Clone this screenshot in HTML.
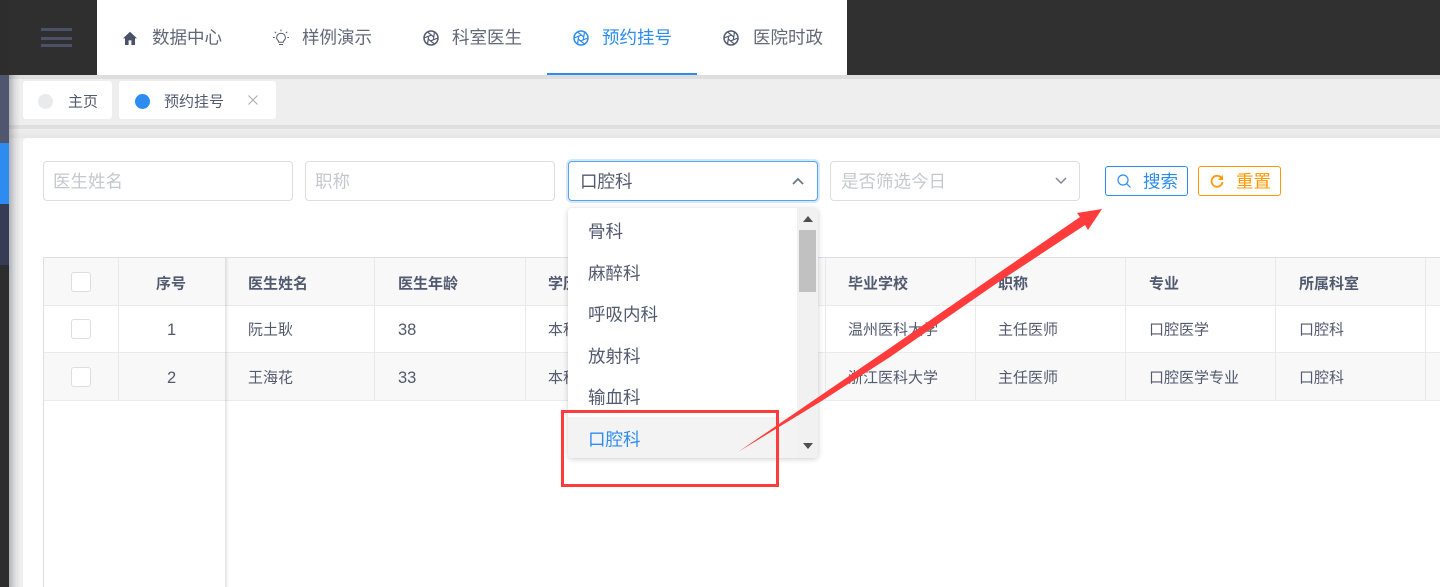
<!DOCTYPE html>
<html lang="zh-CN">
<head>
<meta charset="utf-8">
<title>预约挂号</title>
<style>
html,body{margin:0;padding:0;width:1440px;height:587px;overflow:hidden;background:#fff}
body{position:relative;font-family:"Liberation Sans","Noto Sans CJK SC",sans-serif;color:#515a6e}
.a{position:absolute;box-sizing:border-box}
.t{position:absolute;white-space:nowrap;transform:translateY(calc(-50% + 1px));line-height:1}
.nav{font-size:17.5px;color:#616878}
.tab{font-size:15px;color:#515a6e}
.ph{font-size:17.5px;color:#c5c8ce}
.inp{position:absolute;box-sizing:border-box;top:161px;width:250px;height:40px;border:1px solid #dcdee2;border-radius:4px;background:#fff}
.th{font-size:15px;font-weight:bold;color:#515a6e}
.td{font-size:15px;color:#515a6e}
.num{font-size:16.5px}
.dd{font-size:17.5px;color:#515a6e;left:588px}
.v{position:absolute;width:1px;background:#e8eaec}
.h{position:absolute;height:1px;background:#e8eaec}
.cb{position:absolute;left:71px;width:20px;height:20px;border:1px solid #dcdee2;border-radius:3px;background:#fff;box-sizing:border-box}
svg{position:absolute;overflow:visible}
</style>
</head>
<body>
<!-- page background -->
<div class="a" style="left:9px;top:75px;width:1431px;height:512px;background:#eee"></div>
<div class="a" style="left:9px;top:75px;width:1431px;height:4px;background:#dedede"></div>
<div class="a" style="left:9px;top:125px;width:1431px;height:4px;background:#dfdfdf"></div>
<div class="a" style="left:9px;top:129px;width:1431px;height:9px;background:linear-gradient(#efefef,#e6e6e6)"></div>
<div class="a" style="left:9px;top:75px;width:11px;height:512px;background:linear-gradient(90deg,rgba(60,65,80,.34),rgba(60,65,80,.1) 55%,rgba(60,65,80,0))"></div>

<!-- left strip -->
<div class="a" style="left:0;top:75px;width:9px;height:68px;background:#4f566d"></div>
<div class="a" style="left:0;top:143px;width:9px;height:61px;background:#2d8cf0"></div>
<div class="a" style="left:0;top:204px;width:9px;height:61px;background:#363c54"></div>
<div class="a" style="left:0;top:265px;width:9px;height:322px;background:#2d2d2d"></div>

<!-- top bar -->
<div class="a" style="left:0;top:0;width:97px;height:75px;background:#2f2f2f"></div>
<div class="a" style="left:0;top:0;width:9px;height:75px;background:#2d2d2d"></div>
<div class="a" style="left:847px;top:0;width:593px;height:75px;background:#303030"></div>
<div class="a" style="left:97px;top:0;width:750px;height:75px;background:#fff"></div>
<div class="a" style="left:41px;top:28px;width:31px;height:3px;background:#4b5268"></div>
<div class="a" style="left:41px;top:37px;width:31px;height:3px;background:#4b5268"></div>
<div class="a" style="left:41px;top:44px;width:31px;height:3px;background:#4b5268"></div>
<div class="a" style="left:547px;top:73px;width:150px;height:2px;background:#2d8cf0"></div>

<svg style="left:123px;top:31px" width="14" height="14" viewBox="0 0 14 14"><path d="M7 .8 0 7.4h2V14h3.600V9.400h2.800V14H12V7.400h2z" fill="#4b5268"/></svg>
<span class="t nav" style="left:152px;top:37px">数据中心</span>

<svg style="left:273px;top:29px" width="16" height="17" viewBox="0 0 16 17" fill="none" stroke="#515a6e" stroke-width="1"><path d="M5 11.500C3.800 10.500 3.600 9.400 3.600 8.600a4.400 4.400 0 0 1 8.800 0c0 .8-.2 1.900-1.400 2.900-.5.500-.8 1.100-.8 1.800H5.800c0-.7-.3-1.300-.8-1.800zM6 15.500h4M8 .5v1.800M1.800 2.800l1.300 1.300M14.200 2.800l-1.300 1.300M0 8.500h1.700M14.300 8.500H16"/></svg>
<span class="t nav" style="left:302px;top:37px">样例演示</span>

<svg style="left:423px;top:30px" width="16" height="16" viewBox="0 0 16 16" fill="none" stroke="#515a6e"><circle cx="8" cy="8" r="7" stroke-width="1.500"/><path stroke-width="1.200" d="M15 8L7.480 10.950M11.500 14.060L5.180 9.030M4.500 14.060L5.700 6.070M1 8L8.520 5.050M4.500 1.940L10.820 6.970M11.500 1.940L10.300 9.930"/></svg>
<span class="t nav" style="left:452px;top:37px">科室医生</span>

<svg style="left:573px;top:30px" width="16" height="16" viewBox="0 0 16 16" fill="none" stroke="#2d8cf0"><circle cx="8" cy="8" r="7" stroke-width="1.500"/><path stroke-width="1.200" d="M15 8L7.480 10.950M11.500 14.060L5.180 9.030M4.500 14.060L5.700 6.070M1 8L8.520 5.050M4.500 1.940L10.820 6.970M11.500 1.940L10.300 9.930"/></svg>
<span class="t nav" style="left:602px;top:37px;color:#2d8cf0">预约挂号</span>

<svg style="left:723px;top:30px" width="16" height="16" viewBox="0 0 16 16" fill="none" stroke="#515a6e"><circle cx="8" cy="8" r="7" stroke-width="1.500"/><path stroke-width="1.200" d="M15 8L7.480 10.950M11.500 14.060L5.180 9.030M4.500 14.060L5.700 6.070M1 8L8.520 5.050M4.500 1.940L10.820 6.970M11.500 1.940L10.300 9.930"/></svg>
<span class="t nav" style="left:753px;top:37px">医院时政</span>

<!-- tabs -->
<div class="a" style="left:23px;top:81px;width:89px;height:38px;background:#fff;border-radius:3px"></div>
<div class="a" style="left:38px;top:94px;width:15px;height:15px;border-radius:50%;background:#e8eaec"></div>
<span class="t tab" style="left:68px;top:101px">主页</span>
<div class="a" style="left:119px;top:81px;width:157px;height:38px;background:#fff;border-radius:3px"></div>
<div class="a" style="left:135px;top:94px;width:15px;height:15px;border-radius:50%;background:#2d8cf0"></div>
<span class="t tab" style="left:164px;top:101px">预约挂号</span>
<svg style="left:248px;top:95px" width="10" height="10" viewBox="0 0 10 10"><path d="M.5.500l9 9M9.500.500l-9 9" stroke="#a8abb2" stroke-width="1" fill="none"/></svg>

<!-- card -->
<div class="a" style="left:23px;top:138px;width:1417px;height:449px;background:#fff;border-radius:4px 0 0 0"></div>

<!-- filters -->
<div class="inp" style="left:43px"></div>
<span class="t ph" style="left:53px;top:181px">医生姓名</span>
<div class="inp" style="left:305px"></div>
<span class="t ph" style="left:315px;top:181px">职称</span>
<div class="inp" style="left:568px;border-color:#57a3f3;box-shadow:0 0 0 2px rgba(45,140,240,.2)"></div>
<span class="t" style="left:580px;top:181px;font-size:17.500px;color:#515a6e">口腔科</span>
<svg style="left:792px;top:178px" width="12" height="7" viewBox="0 0 12 7"><path d="M1 6l5-5 5 5" fill="none" stroke="#6b7486" stroke-width="1.700"/></svg>
<div class="inp" style="left:830px"></div>
<span class="t ph" style="left:841px;top:181px">是否筛选今日</span>
<svg style="left:1055px;top:177px" width="12" height="7" viewBox="0 0 12 7"><path d="M1 1l5 5 5-5" fill="none" stroke="#808695" stroke-width="1.500"/></svg>

<!-- buttons -->
<div class="a" style="left:1105px;top:166px;width:83px;height:30px;border:1px solid #2d8cf0;border-radius:3px;background:#fff"></div>
<svg style="left:1117px;top:174px" width="15" height="15" viewBox="0 0 15 15" fill="none" stroke="#2d8cf0" stroke-width="1.200"><circle cx="6" cy="6" r="5"/><path d="M9.700 9.700l3.800 3.800"/></svg>
<span class="t" style="left:1143px;top:181px;font-size:17.500px;color:#2d8cf0">搜索</span>
<div class="a" style="left:1198px;top:166px;width:83px;height:30px;border:1px solid #f90;border-radius:3px;background:#fff"></div>
<svg style="left:1210px;top:174px" width="14" height="14" viewBox="0 0 14 14" fill="none"><path d="M11.800 4.500A5.500 5.500 0 1 0 12.500 8" stroke="#f90" stroke-width="1.800"/><path d="M13 1v5H8z" fill="#f90"/></svg>
<span class="t" style="left:1236px;top:181px;font-size:17.500px;color:#f90">重置</span>

<!-- table -->
<div class="a" style="left:43px;top:257px;width:1397px;height:330px;border:1px solid #dcdee2;border-width:1px 0 0 1px"></div>
<div class="a" style="left:44px;top:258px;width:1396px;height:47px;background:#f8f8f9"></div>
<div class="a" style="left:44px;top:353px;width:1396px;height:47px;background:#f8f8f9"></div>
<div class="h" style="left:44px;top:305px;width:1396px"></div>
<div class="h" style="left:44px;top:352px;width:1396px"></div>
<div class="h" style="left:44px;top:400px;width:1396px"></div>
<div class="v" style="left:118px;top:258px;height:142px"></div>
<div class="v" style="left:374px;top:258px;height:142px"></div>
<div class="v" style="left:525px;top:258px;height:142px"></div>
<div class="v" style="left:825px;top:258px;height:142px"></div>
<div class="v" style="left:975px;top:258px;height:142px"></div>
<div class="v" style="left:1125px;top:258px;height:142px"></div>
<div class="v" style="left:1275px;top:258px;height:142px"></div>
<div class="v" style="left:1425px;top:258px;height:142px"></div>
<div class="a" style="left:225px;top:258px;width:4px;height:329px;background:linear-gradient(90deg,rgba(0,0,0,.11),rgba(0,0,0,0))"></div>

<div class="cb" style="top:272px"></div>
<div class="cb" style="top:319px"></div>
<div class="cb" style="top:367px"></div>

<span class="t th" style="left:156px;top:283px">序号</span>
<span class="t th" style="left:248px;top:283px">医生姓名</span>
<span class="t th" style="left:398px;top:283px">医生年龄</span>
<span class="t th" style="left:548px;top:283px">学历</span>
<span class="t th" style="left:848px;top:283px">毕业学校</span>
<span class="t th" style="left:998px;top:283px">职称</span>
<span class="t th" style="left:1149px;top:283px">专业</span>
<span class="t th" style="left:1299px;top:283px">所属科室</span>

<span class="t td num" style="left:167px;top:329px">1</span>
<span class="t td" style="left:248px;top:329px">阮土耿</span>
<span class="t td num" style="left:398px;top:329px">38</span>
<span class="t td" style="left:548px;top:329px">本科</span>
<span class="t td" style="left:848px;top:329px">温州医科大学</span>
<span class="t td" style="left:998px;top:329px">主任医师</span>
<span class="t td" style="left:1149px;top:329px">口腔医学</span>
<span class="t td" style="left:1299px;top:329px">口腔科</span>

<span class="t td num" style="left:167px;top:377px">2</span>
<span class="t td" style="left:248px;top:377px">王海花</span>
<span class="t td num" style="left:398px;top:377px">33</span>
<span class="t td" style="left:548px;top:377px">本科</span>
<span class="t td" style="left:848px;top:377px">浙江医科大学</span>
<span class="t td" style="left:998px;top:377px">主任医师</span>
<span class="t td" style="left:1149px;top:377px">口腔医学专业</span>
<span class="t td" style="left:1299px;top:377px">口腔科</span>

<!-- dropdown -->
<div class="a" style="left:568px;top:208px;width:250px;height:250px;background:#fff;border-radius:4px;box-shadow:0 1px 6px rgba(0,0,0,.2);overflow:hidden">
  <div class="a" style="left:0;top:209px;width:229px;height:41px;background:#f3f3f3"></div>
  <div class="a" style="left:229px;top:0;width:21px;height:250px;background:#f1f1f1"></div>
  <div class="a" style="left:231px;top:22px;width:17px;height:62px;background:#c1c1c1"></div>
</div>
<svg style="left:803px;top:216px" width="10" height="6" viewBox="0 0 10 6"><path d="M5 0l5 6H0z" fill="#505050"/></svg>
<svg style="left:803px;top:443px" width="10" height="6" viewBox="0 0 10 6"><path d="M0 0h10L5 6z" fill="#505050"/></svg>
<span class="t dd" style="top:231px">骨科</span>
<span class="t dd" style="top:273px">麻醉科</span>
<span class="t dd" style="top:314px">呼吸内科</span>
<span class="t dd" style="top:356px">放射科</span>
<span class="t dd" style="top:397px">输血科</span>
<span class="t dd" style="top:439px;color:#2d8cf0">口腔科</span>

<!-- annotations -->
<div class="a" style="left:561px;top:410px;width:218px;height:77px;border:3px solid #ff3b3b"></div>
<svg style="left:0;top:0" width="1440" height="587" viewBox="0 0 1440 587"><polygon points="738,452 890,348 1000,272 1080,217 1077,213 1102,209 1088,230 1085,225 1000,281 890,357 820,402" fill="#ff3b3b"/></svg>
</body>
</html>
